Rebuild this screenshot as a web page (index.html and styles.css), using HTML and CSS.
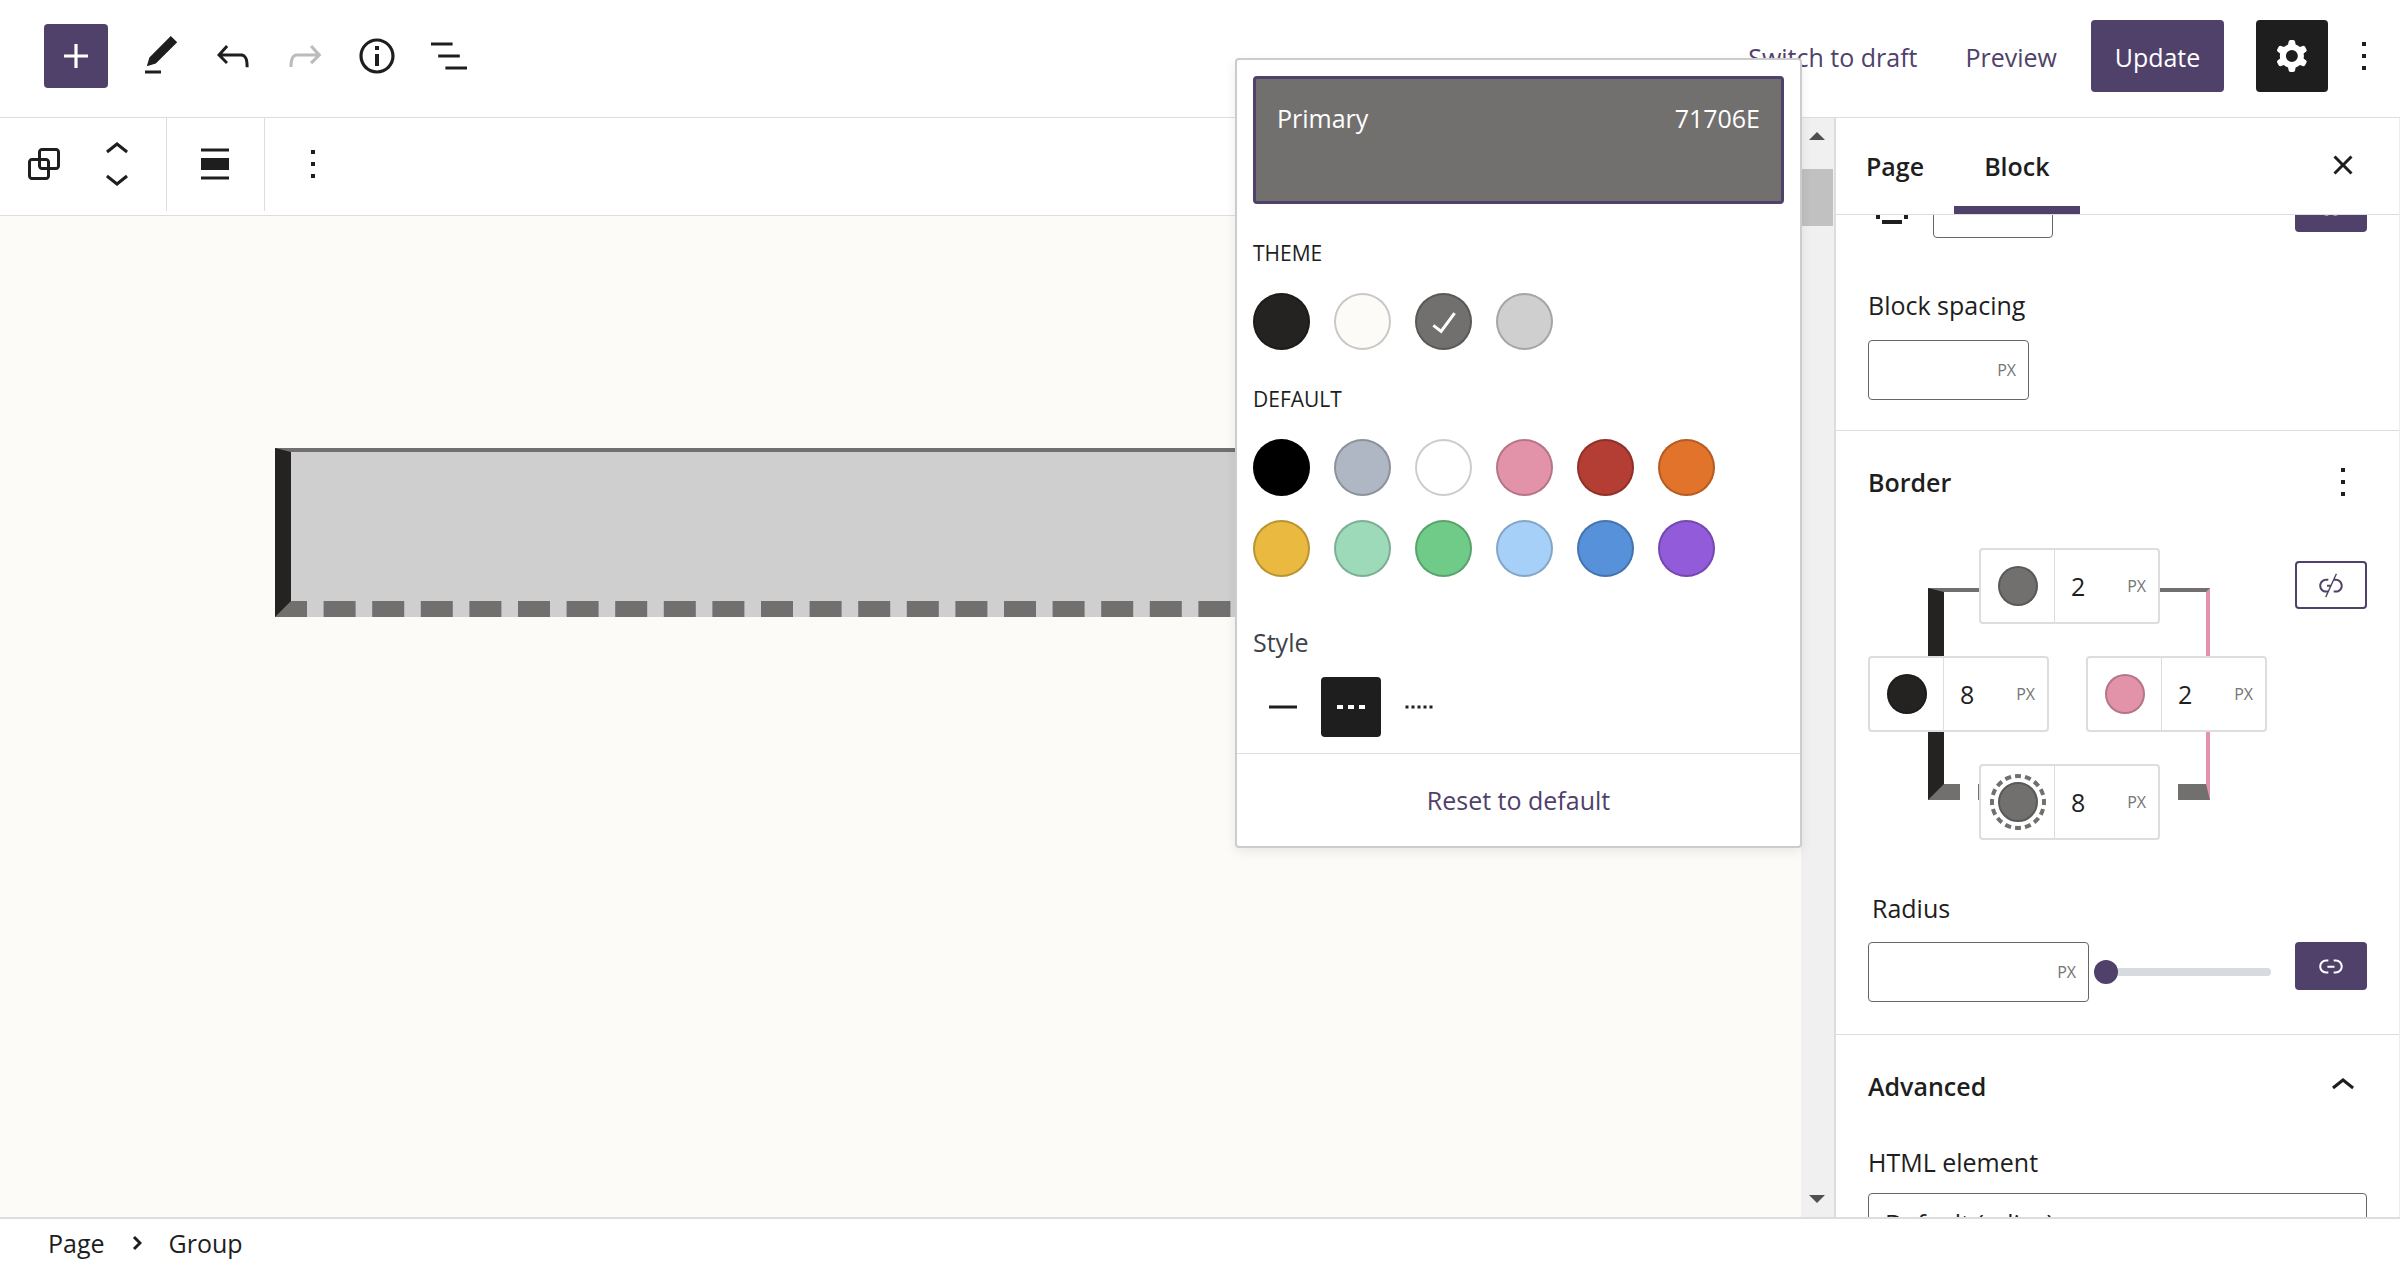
FILE: index.html
```
<!DOCTYPE html>
<html lang="en">
<head>
    <meta charset="UTF-8">
    <meta name="viewport" content="width=device-width, initial-scale=1.0">
    <title>Edit Page</title>
    <link rel="stylesheet" href="styles.css">
</head>
<body>
    <header class="header">
        <div class="header-tools">
            <button type="button" class="add-button" aria-label="Toggle block inserter">
                <svg class="icon" viewBox="0 0 24 24"><path d="M18 11.2h-5.2V6h-1.6v5.2H6v1.6h5.2V18h1.6v-5.2H18z"/></svg>
            </button>
            <button type="button" class="icon-button" aria-label="Tools">
                <svg class="icon" viewBox="0 0 24 24"><path d="M20.1 5.1L16.9 2 6.2 12.7l-1.3 4.4 4.5-1.3L20.1 5.1zM4 20.8h8v-1.5H4v1.5z"/></svg>
            </button>
            <button type="button" class="icon-button" aria-label="Undo">
                <svg class="icon" viewBox="0 0 24 24"><path d="M18.3 11.7c-.6-.6-1.4-.9-2.3-.9H6.7l2.9-3.3-1.1-1-4.5 5L8.5 16l1-1-2.7-2.7H16c.5 0 .9.2 1.3.5 1 1 1 3.4 1 4.5v.3h1.5v-.2c0-1.5 0-4.3-1.5-5.7z"/></svg>
            </button>
            <button type="button" class="icon-button" aria-label="Redo" disabled>
                <svg class="icon" viewBox="0 0 24 24"><path d="M15.6 6.5l-1.1 1 2.9 3.3H8c-.9 0-1.7.3-2.3.9-1.4 1.5-1.4 4.2-1.4 5.6v.2h1.5v-.3c0-1.1 0-3.5 1-4.5.3-.3.7-.5 1.3-.5h9.2L14.5 15l1.1 1.1 4.6-4.6-4.6-5z"/></svg>
            </button>
            <button type="button" class="icon-button" aria-label="Details">
                <svg class="icon" viewBox="0 0 24 24"><path d="M12 3.2c-4.8 0-8.8 3.9-8.8 8.8 0 4.8 3.9 8.8 8.8 8.8 4.8 0 8.8-3.9 8.8-8.8 0-4.8-4-8.8-8.8-8.8zm0 16c-4 0-7.2-3.3-7.2-7.2C4.8 8 8 4.8 12 4.8s7.2 3.3 7.2 7.2c0 4-3.2 7.2-7.2 7.2zM11 17h2v-6h-2v6zm0-8h2V7h-2v2z"/></svg>
            </button>
            <button type="button" class="icon-button" aria-label="List view">
                <svg class="icon" viewBox="0 0 24 24"><path d="M13.8 5.2H3v1.5h10.8V5.2zm-3.6 12v1.5H21v-1.5H10.2zm7.2-6H6.6v1.5h10.8v-1.5z"/></svg>
            </button>
        </div>
        <div class="header-settings">
            <button type="button" class="link-button">Switch to draft</button>
            <button type="button" class="link-button">Preview</button>
            <button type="button" class="update-button">Update</button>
            <button type="button" class="settings-button" aria-label="Settings">
                <svg class="icon" viewBox="0 0 24 24"><path fill-rule="evenodd" d="M10.289 4.836A1 1 0 0111.275 4h1.306a1 1 0 01.987.836l.244 1.466c.787.26 1.503.679 2.108 1.218l1.393-.522a1 1 0 011.216.437l.653 1.13a1 1 0 01-.23 1.273l-1.148.944a6.025 6.025 0 010 2.435l1.149.946a1 1 0 01.23 1.272l-.653 1.13a1 1 0 01-1.216.437l-1.394-.522c-.605.54-1.32.958-2.108 1.218l-.244 1.466a1 1 0 01-.987.836h-1.306a1 1 0 01-.986-.836l-.244-1.466a5.995 5.995 0 01-2.108-1.218l-1.394.522a1 1 0 01-1.217-.436l-.653-1.131a1 1 0 01.23-1.272l1.149-.946a6.026 6.026 0 010-2.435l-1.148-.944a1 1 0 01-.23-1.272l.653-1.131a1 1 0 011.217-.437l1.393.522a5.994 5.994 0 012.108-1.218l.244-1.466zM14.929 12a3 3 0 11-6 0 3 3 0 016 0z"/></svg>
            </button>
            <button type="button" class="more-button" aria-label="Options">
                <svg class="icon" viewBox="0 0 24 24"><path d="M13 19h-2v-2h2v2zm0-6h-2v-2h2v2zm0-6h-2V5h2v2z"/></svg>
            </button>
        </div>
    </header>

    <div class="editor">
        <main class="content">
            <div class="block-toolbar">
                <div class="toolbar-group">
                    <button type="button" class="toolbar-button" aria-label="Group">
                        <svg class="icon" viewBox="0 0 24 24"><path d="M18 4h-7c-1.1 0-2 .9-2 2v3H6c-1.1 0-2 .9-2 2v7c0 1.1.9 2 2 2h7c1.1 0 2-.9 2-2v-3h3c1.1 0 2-.9 2-2V6c0-1.1-.9-2-2-2zm-4.5 14c0 .3-.2.5-.5.5H6c-.3 0-.5-.2-.5-.5v-7c0-.3.2-.5.5-.5h3V13c0 1.1.9 2 2 2h2.5v3zm0-4.5H11c-.3 0-.5-.2-.5-.5v-2.5H13c.3 0 .5.2.5.5v2.5zm5-.5c0 .3-.2.5-.5.5h-3V11c0-1.1-.9-2-2-2h-2.5V6c0-.3.2-.5.5-.5h7c.3 0 .5.2.5.5v7z"/></svg>
                    </button>
                    <div class="mover">
                        <button type="button" class="mover-button" aria-label="Move up">
                            <svg class="icon" viewBox="0 0 24 24"><path d="M6.5 12.4L12 8l5.5 4.4-.9 1.2L12 10l-4.5 3.6-1-1.2z"/></svg>
                        </button>
                        <button type="button" class="mover-button" aria-label="Move down">
                            <svg class="icon" viewBox="0 0 24 24"><path d="M17.5 11.6L12 16l-5.5-4.4.9-1.2L12 14l4.5-3.6 1 1.2z"/></svg>
                        </button>
                    </div>
                </div>
                <div class="toolbar-group">
                    <button type="button" class="toolbar-button" aria-label="Align">
                        <svg class="icon" viewBox="0 0 24 24"><path d="M5 15h14V9H5v6zm0 4.8h14v-1.5H5v1.5zM5 4.2v1.5h14V4.2H5z"/></svg>
                    </button>
                </div>
                <div class="toolbar-group">
                    <button type="button" class="toolbar-button" aria-label="Options">
                        <svg class="icon" viewBox="0 0 24 24"><path d="M13 19h-2v-2h2v2zm0-6h-2v-2h2v2zm0-6h-2V5h2v2z"/></svg>
                    </button>
                </div>
            </div>
            <div class="canvas">
                <div class="group-block"></div>
            </div>
        </main>

        <div class="scrollbar">
            <svg class="scroll-arrow" viewBox="0 0 16 8"><path d="M8 0l8 8H0z"/></svg>
            <div class="scroll-thumb"></div>
            <svg class="scroll-arrow" viewBox="0 0 16 8"><path d="M0 0h16L8 8z"/></svg>
        </div>

        <aside class="sidebar">
            <div class="tabs">
                <button type="button" class="tab">Page</button>
                <button type="button" class="tab active">Block</button>
                <button type="button" class="icon-button tabs-close" aria-label="Close settings">
                    <svg class="icon" viewBox="0 0 24 24"><path d="M12 13.06l3.712 3.713 1.061-1.06L13.061 12l3.712-3.712-1.06-1.06L12 10.938 8.288 7.227l-1.061 1.06L10.939 12l-3.712 3.712 1.06 1.061L12 13.061z"/></svg>
                </button>
            </div>
            <div class="panels">
                <section class="panel dimensions">
                    <div class="padding-row">
                        <svg class="icon" viewBox="0 0 24 24"><path d="M7 4h10v2H7zM7 18h10v2H7zM4 7h2v2H4zM18 7h2v2h-2zM4 15.5h2v2H4zM18 15.5h2v2h-2z"/></svg>
                        <input type="text" class="padding-input" aria-label="Padding">
                        <button type="button" class="link-toggle linked" aria-label="Unlink sides">
                            <svg viewBox="0 0 24 24"><path d="M15.6 7.2H14v1.5h1.6c2 0 3.7 1.7 3.7 3.7s-1.7 3.7-3.7 3.7H14v1.5h1.6c2.8 0 5.2-2.3 5.2-5.2 0-2.9-2.3-5.2-5.2-5.2zM4.7 12.4c0-2 1.7-3.7 3.7-3.7H10V7.2H8.4c-2.9 0-5.2 2.3-5.2 5.2 0 2.9 2.3 5.2 5.2 5.2H10v-1.5H8.4c-2 0-3.7-1.7-3.7-3.7zm4.6.9h5.3v-1.5H9.3v1.5z"/></svg>
                        </button>
                    </div>
                    <label class="label" for="blockSpacing">Block spacing</label>
                    <div class="unit-input spacing-input">
                        <input type="text" id="blockSpacing">
                        <span class="unit">PX</span>
                    </div>
                </section>

                <section class="panel border-panel">
                    <div class="panel-header">
                        <h2>Border</h2>
                        <button type="button" class="icon-button" aria-label="Border options">
                            <svg class="icon" viewBox="0 0 24 24"><path d="M13 19h-2v-2h2v2zm0-6h-2v-2h2v2zm0-6h-2V5h2v2z"/></svg>
                        </button>
                    </div>
                    <div class="border-row">
                        <div class="border-box">
                            <div class="border-preview"></div>
                            <div class="side top">
                                <button type="button" class="side-color" aria-label="Top border color"><span class="dot gray"></span></button>
                                <input type="text" value="2" aria-label="Top border width">
                                <span class="unit">PX</span>
                            </div>
                            <div class="side left">
                                <button type="button" class="side-color" aria-label="Left border color"><span class="dot black"></span></button>
                                <input type="text" value="8" aria-label="Left border width">
                                <span class="unit">PX</span>
                            </div>
                            <div class="side right">
                                <button type="button" class="side-color" aria-label="Right border color"><span class="dot pink"></span></button>
                                <input type="text" value="2" aria-label="Right border width">
                                <span class="unit">PX</span>
                            </div>
                            <div class="side bottom">
                                <button type="button" class="side-color" aria-label="Bottom border color">
                                    <svg class="ring" viewBox="0 0 56 56">
                                        <circle class="ring-line" cx="28" cy="28" r="26" pathLength="160"/>
                                        <circle class="ring-dot" cx="28" cy="28" r="19"/>
                                    </svg>
                                </button>
                                <input type="text" value="8" aria-label="Bottom border width">
                                <span class="unit">PX</span>
                            </div>
                        </div>
                        <button type="button" class="link-toggle" aria-label="Link sides">
                            <svg viewBox="0 0 24 24"><path d="M15.6 7.3h-.7l1.6-3.5-.9-.4-3.9 8.5H9v1.5h2l-1.3 2.8H8.4c-2 0-3.7-1.7-3.7-3.7s1.7-3.7 3.7-3.7H10V7.3H8.4c-2.9 0-5.2 2.3-5.2 5.2 0 2.9 2.3 5.2 5.2 5.2H9l-1.4 3.2.9.4 5.7-12.5h1.4c2 0 3.7 1.7 3.7 3.7s-1.7 3.7-3.7 3.7H14v1.5h1.6c2.9 0 5.2-2.3 5.2-5.2 0-2.9-2.4-5.2-5.2-5.2z"/></svg>
                        </button>
                    </div>
                    <label class="label radius-label" for="radius">Radius</label>
                    <div class="radius-row">
                        <div class="unit-input radius-input">
                            <input type="text" id="radius">
                            <span class="unit">PX</span>
                        </div>
                        <input type="range" class="slider" min="0" max="100" value="0" aria-label="Radius">
                        <button type="button" class="link-toggle linked" aria-label="Unlink radii">
                            <svg viewBox="0 0 24 24"><path d="M15.6 7.2H14v1.5h1.6c2 0 3.7 1.7 3.7 3.7s-1.7 3.7-3.7 3.7H14v1.5h1.6c2.8 0 5.2-2.3 5.2-5.2 0-2.9-2.3-5.2-5.2-5.2zM4.7 12.4c0-2 1.7-3.7 3.7-3.7H10V7.2H8.4c-2.9 0-5.2 2.3-5.2 5.2 0 2.9 2.3 5.2 5.2 5.2H10v-1.5H8.4c-2 0-3.7-1.7-3.7-3.7zm4.6.9h5.3v-1.5H9.3v1.5z"/></svg>
                        </button>
                    </div>
                </section>

                <section class="panel advanced">
                    <div class="panel-header">
                        <h2>Advanced</h2>
                        <button type="button" class="icon-button" aria-label="Collapse Advanced">
                            <svg class="icon" viewBox="0 0 24 24"><path d="M6.5 12.4L12 8l5.5 4.4-.9 1.2L12 10l-4.5 3.6-1-1.2z"/></svg>
                        </button>
                    </div>
                    <label class="label" for="htmlElement">HTML element</label>
                    <select id="htmlElement" class="select">
                        <option>Default (&lt;div&gt;)</option>
                    </select>
                </section>
            </div>
        </aside>
    </div>

    <footer class="breadcrumb">
        <a href="#">Page</a>
        <svg class="crumb-arrow" viewBox="0 0 10 16"><path d="M2 2l6 6-6 6"/></svg>
        <a href="#">Group</a>
    </footer>

    <div class="popover">
        <div class="popover-body">
            <button type="button" class="color-card">
                <span>Primary</span>
                <span>71706E</span>
            </button>
            <h3>THEME</h3>
            <div class="swatches">
                <button type="button" class="swatch black" aria-label="Foreground"></button>
                <button type="button" class="swatch cream" aria-label="Background"></button>
                <button type="button" class="swatch gray" aria-label="Primary">
                    <svg class="icon" viewBox="0 0 24 24"><path d="M16.7 7.1l-6.3 8.5-3.3-2.5-.9 1.2 4.5 3.4L17.9 8z"/></svg>
                </button>
                <button type="button" class="swatch light" aria-label="Secondary"></button>
            </div>
            <h3>DEFAULT</h3>
            <div class="swatches">
                <button type="button" class="swatch pure-black" aria-label="Black"></button>
                <button type="button" class="swatch bluish" aria-label="Cyan bluish gray"></button>
                <button type="button" class="swatch white" aria-label="White"></button>
                <button type="button" class="swatch pink" aria-label="Pale pink"></button>
                <button type="button" class="swatch red" aria-label="Vivid red"></button>
                <button type="button" class="swatch orange" aria-label="Vivid orange"></button>
                <button type="button" class="swatch amber" aria-label="Vivid amber"></button>
                <button type="button" class="swatch mint" aria-label="Light green cyan"></button>
                <button type="button" class="swatch green" aria-label="Vivid green cyan"></button>
                <button type="button" class="swatch sky" aria-label="Pale cyan blue"></button>
                <button type="button" class="swatch blue" aria-label="Vivid cyan blue"></button>
                <button type="button" class="swatch purple" aria-label="Vivid purple"></button>
            </div>
            <h4>Style</h4>
            <div class="style-buttons">
                <button type="button" class="style-button" aria-label="Solid">
                    <svg class="icon" viewBox="0 0 24 24"><path d="M5 11.25h14v1.5H5z"/></svg>
                </button>
                <button type="button" class="style-button active" aria-label="Dashed">
                    <svg class="icon" viewBox="0 0 24 24"><path d="M5 11h3v2H5zM10.5 11h3v2h-3zM16 11h3v2h-3z"/></svg>
                </button>
                <button type="button" class="style-button" aria-label="Dotted">
                    <svg class="icon" viewBox="0 0 24 24"><path d="M5.25 11.25h1.5v1.5h-1.5zM8.25 11.25h1.5v1.5h-1.5zM11.25 11.25h1.5v1.5h-1.5zM14.25 11.25h1.5v1.5h-1.5zM17.25 11.25h1.5v1.5h-1.5z"/></svg>
                </button>
            </div>
        </div>
        <button type="button" class="reset-button">Reset to default</button>
    </div>
</body>
</html>
```

FILE: styles.css
```
:root {
    --accent: #50416a;
    --text: #1e1e1e;
    --line: #dddddd;
    --input-line: #666666;
    --muted: #757575;
    --canvas: #fdfbf7;
    --gray: #71706e;
    --black: #242321;
    --pink: #e293a9;
}

* {
    box-sizing: border-box;
}

body {
    margin: 0;
    height: 100vh;
    display: flex;
    flex-direction: column;
    overflow: hidden;
    background-color: #ffffff;
    color: var(--text);
    font-family: 'Segoe UI', 'Open Sans', 'Noto Sans', sans-serif;
    font-size: 25px;
    line-height: 32px;
}

button,
input,
select {
    font: inherit;
    color: inherit;
}

button {
    display: flex;
    align-items: center;
    justify-content: center;
    padding: 0;
    border: none;
    border-radius: 4px;
    background: none;
    cursor: pointer;
}

h2,
h3,
h4 {
    margin: 0;
    font-size: 25px;
    font-weight: 600;
}

.icon {
    display: block;
    width: 48px;
    height: 48px;
    fill: currentColor;
}

/* Header */
.header {
    display: flex;
    justify-content: space-between;
    align-items: center;
    height: 118px;
    padding: 0 12px 6px 44px;
    border-bottom: 1px solid var(--line);
    flex-shrink: 0;
}

.header-tools,
.header-settings {
    display: flex;
    align-items: center;
}

.add-button {
    width: 64px;
    height: 64px;
    margin-right: 17px;
    background-color: var(--accent);
    color: #ffffff;
}

.icon-button {
    width: 72px;
    height: 72px;
}

.icon-button:disabled {
    color: #bbbbbb;
}

.link-button {
    height: 72px;
    padding: 2px 24px 0;
    color: var(--accent);
}

.update-button {
    width: 133px;
    height: 72px;
    margin: 0 32px 0 10px;
    padding-top: 2px;
    background-color: var(--accent);
    color: #ffffff;
}

.settings-button {
    width: 72px;
    height: 72px;
    background-color: var(--text);
    color: #ffffff;
}

.more-button {
    width: 48px;
    height: 72px;
    margin-left: 12px;
}

/* Editor area */
.editor {
    display: flex;
    flex: 1;
    min-height: 0;
}

.content {
    display: flex;
    flex-direction: column;
    flex: 1;
    min-width: 0;
}

.block-toolbar {
    display: flex;
    height: 98px;
    padding-bottom: 4px;
    border-bottom: 1px solid var(--line);
}

.toolbar-group {
    display: flex;
    align-items: center;
    padding: 0 13px 2px 12px;
    border-right: 1px solid var(--line);
}

.toolbar-group:first-child {
    padding-left: 8px;
}

.toolbar-group:last-child {
    border-right: none;
}

.toolbar-button {
    width: 72px;
    height: 72px;
}

.mover {
    width: 73px;
}

.mover-button {
    width: 73px;
    height: 28px;
    overflow: visible;
}

.canvas {
    flex: 1;
    padding: 232px 279px 0 275px;
    background-color: var(--canvas);
}

.group-block {
    height: 169px;
    background-color: #cfcfcf;
    border-top: 4px solid var(--gray);
    border-right: 4px solid var(--pink);
    border-bottom: 16px dashed var(--gray);
    border-left: 16px solid var(--black);
}

.scrollbar {
    display: flex;
    flex-direction: column;
    align-items: center;
    width: 33px;
    padding: 14px 1px 14px 0;
    background-color: #f0f0f0;
}

.scroll-arrow {
    width: 16px;
    height: 8px;
    fill: #505050;
}

.scroll-thumb {
    width: 100%;
    height: 57px;
    margin: 29px 0 auto;
    background-color: #c1c1c1;
}

/* Sidebar */
.sidebar {
    display: flex;
    flex-direction: column;
    width: 566px;
    border-left: 2px solid var(--line);
    border-right: 1px solid #eeeeee;
}

.tabs {
    display: flex;
    height: 97px;
    border-bottom: 1px solid var(--line);
    flex-shrink: 0;
}

.tab {
    padding: 0 30px;
    border-radius: 0;
    font-weight: 600;
}

.tab.active {
    box-shadow: inset 0 -8px 0 0 var(--accent);
}

.tabs-close {
    margin: 11px 20px 0 auto;
}

.panels {
    overflow: hidden;
}

.panel {
    padding: 0 32px;
    border-bottom: 1px solid var(--line);
}

.panel-header {
    display: flex;
    align-items: center;
    justify-content: space-between;
    margin-right: -12px;
}

.label {
    display: block;
    margin-bottom: 19px;
}

/* Scrolled so that only the end of the padding control shows */
.dimensions {
    margin-top: -37px;
    padding-bottom: 30px;
}

.padding-row {
    display: flex;
    align-items: center;
    margin-bottom: 51px;
}

.padding-input {
    width: 120px;
    height: 60px;
    margin: 0 auto 0 17px;
    border: 1px solid var(--input-line);
    border-radius: 4px;
}

.unit-input {
    display: flex;
    align-items: center;
    height: 60px;
    padding-right: 12px;
    border: 1px solid var(--input-line);
    border-radius: 4px;
}

.unit-input input,
.side input {
    flex: 1;
    width: 0;
    padding: 0;
    border: none;
    background: none;
    outline: none;
}

.unit {
    color: var(--muted);
    font-size: 16px;
}

.spacing-input {
    width: 161px;
}

.link-toggle {
    width: 72px;
    height: 48px;
    border: 2px solid var(--accent);
    color: var(--accent);
}

.link-toggle svg {
    width: 32px;
    height: 32px;
    fill: currentColor;
}

.link-toggle.linked {
    background-color: var(--accent);
    color: #ffffff;
}

.border-panel {
    padding-top: 15px;
    padding-bottom: 32px;
}

.border-row {
    display: flex;
    align-items: flex-start;
    justify-content: space-between;
    margin: 30px 0 52px;
}

.border-row .link-toggle {
    margin-top: 13px;
}

.border-box {
    position: relative;
    display: grid;
    grid-template-columns: 181px 181px;
    justify-content: space-between;
    row-gap: 32px;
    width: 399px;
}

.border-preview {
    position: absolute;
    inset: 40px 57px 40px 60px;
    border-top: 4px solid var(--gray);
    border-right: 4px solid var(--pink);
    border-bottom: 16px dashed var(--gray);
    border-left: 16px solid var(--black);
}

.side {
    position: relative;
    display: flex;
    align-items: center;
    width: 181px;
    height: 76px;
    padding-right: 12px;
    border: 2px solid var(--line);
    border-radius: 4px;
    background-color: #ffffff;
}

.side.top,
.side.bottom {
    grid-column: 1 / -1;
    justify-self: center;
    margin-left: 4px;
}

.side input {
    padding-left: 16px;
}

.side-color {
    width: 74px;
    height: 72px;
    border-right: 1px solid var(--line);
    border-radius: 0;
}

.dot {
    display: block;
    width: 40px;
    height: 40px;
    border-radius: 50%;
    box-shadow: inset 0 0 0 2px rgba(0, 0, 0, 0.2);
}

.ring {
    width: 56px;
    height: 56px;
}

.ring-line {
    fill: none;
    stroke: var(--gray);
    stroke-width: 4;
    stroke-dasharray: 6 4;
    stroke-dashoffset: 3;
}

.ring-dot {
    fill: var(--gray);
    stroke: #5b5a58;
    stroke-width: 2;
}

.radius-label {
    margin-left: 4px;
    margin-bottom: 18px;
}

.radius-row {
    display: flex;
    align-items: flex-start;
}

.radius-input {
    width: 221px;
}

.slider {
    appearance: none;
    flex: 1;
    height: 60px;
    margin: 0 24px 0 5px;
    background: none;
}

.slider::-webkit-slider-runnable-track {
    height: 8px;
    border-radius: 4px;
    background-color: #d7dade;
}

.slider::-webkit-slider-thumb {
    appearance: none;
    width: 24px;
    height: 24px;
    margin-top: -8px;
    border-radius: 50%;
    background-color: var(--accent);
}

.advanced {
    padding-top: 15px;
    border-bottom: none;
}

.advanced .panel-header {
    margin-bottom: 24px;
}

.advanced .label {
    margin-bottom: 15px;
}

.select {
    appearance: none;
    width: 100%;
    height: 60px;
    padding: 0 16px;
    border: 1px solid var(--input-line);
    border-radius: 4px;
    background-color: #ffffff;
}

/* Footer */
.breadcrumb {
    display: flex;
    align-items: center;
    gap: 27px;
    height: 47px;
    padding: 2px 48px 0;
    border-top: 2px solid var(--line);
    flex-shrink: 0;
}

.breadcrumb a {
    color: var(--text);
    text-decoration: none;
}

.crumb-arrow {
    width: 10px;
    height: 16px;
    fill: none;
    stroke: var(--text);
    stroke-width: 3;
}

/* Border color popover */
.popover {
    position: absolute;
    top: 58px;
    right: 598px;
    width: 567px;
    border: 2px solid #cccccc;
    border-radius: 4px;
    background-color: #ffffff;
    box-shadow: 0 4px 12px rgba(0, 0, 0, 0.08);
}

.popover-body {
    padding: 16px;
    border-bottom: 1px solid var(--line);
}

.color-card {
    align-items: flex-start;
    justify-content: space-between;
    width: 100%;
    height: 128px;
    padding: 23px 21px;
    border: 3px solid var(--accent);
    background-color: var(--gray);
    color: #ffffff;
}

.popover h3 {
    margin: 33px 0 24px;
    font-size: 21px;
    font-weight: 500;
}

.popover h4 {
    margin: 49px 0 19px;
    color: #3c434a;
    font-weight: 500;
}

.swatches {
    display: flex;
    flex-wrap: wrap;
    gap: 24px;
}

.swatch {
    width: 57px;
    height: 57px;
    border-radius: 50%;
    box-shadow: inset 0 0 0 2px rgba(0, 0, 0, 0.2);
    color: #ffffff;
}

.black { background-color: var(--black); }
.cream { background-color: var(--canvas); }
.gray { background-color: var(--gray); }
.light { background-color: #cfcfcf; }
.pure-black { background-color: #000000; }
.bluish { background-color: #aeb7c3; }
.white { background-color: #ffffff; }
.pink { background-color: var(--pink); }
.red { background-color: #b43d34; }
.orange { background-color: #e1732b; }
.amber { background-color: #e9b940; }
.mint { background-color: #9cdab9; }
.green { background-color: #70cb89; }
.sky { background-color: #a6d0f8; }
.blue { background-color: #5691da; }
.purple { background-color: #925bda; }

.style-buttons {
    display: flex;
    gap: 8px;
}

.style-button {
    width: 60px;
    height: 60px;
}

.style-button.active {
    background-color: var(--text);
    color: #ffffff;
}

.reset-button {
    width: 100%;
    height: 92px;
    color: var(--accent);
}
```
